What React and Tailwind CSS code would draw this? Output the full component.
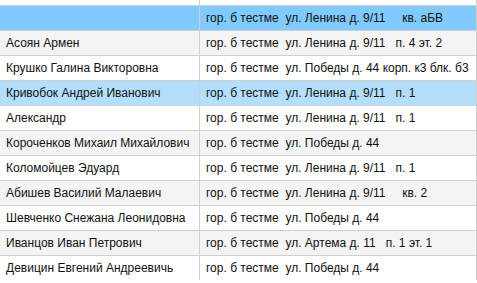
import React from 'react';

const rows = [
    { name: '', addr: 'гор. б тестме  ул. Ленина д. 9/11     кв. аБВ', bg: 'bg-[#80cafd]' },
    { name: 'Асоян Армен', addr: 'гор. б тестме  ул. Ленина д. 9/11   п. 4 эт. 2', bg: 'bg-[#f4f4f4]' },
    { name: 'Крушко Галина Викторовна', addr: 'гор. б тестме  ул. Победы д. 44 корп. к3 блк. б3', bg: 'bg-white' },
    { name: 'Кривобок Андрей Иванович', addr: 'гор. б тестме  ул. Ленина д. 9/11   п. 1', bg: 'bg-[#b4dffc]' },
    { name: 'Александр', addr: 'гор. б тестме  ул. Ленина д. 9/11   п. 1', bg: 'bg-white' },
    { name: 'Короченков Михаил Михайлович', addr: 'гор. б тестме  ул. Победы д. 44', bg: 'bg-[#f4f4f4]' },
    { name: 'Коломойцев Эдуард', addr: 'гор. б тестме  ул. Ленина д. 9/11   п. 1', bg: 'bg-white' },
    { name: 'Абишев Василий Малаевич', addr: 'гор. б тестме  ул. Ленина д. 9/11     кв. 2', bg: 'bg-[#f4f4f4]' },
    { name: 'Шевченко Снежана Леонидовна', addr: 'гор. б тестме  ул. Победы д. 44', bg: 'bg-white' },
    { name: 'Иванцов Иван Петрович', addr: 'гор. б тестме  ул. Артема д. 11   п. 1 эт. 1', bg: 'bg-[#f4f4f4]' },
    { name: 'Девицин Евгений Андреевичь', addr: 'гор. б тестме  ул. Победы д. 44', bg: 'bg-white' },
];

export default function App() {
    return (
        <div className="w-[477px] h-[283px] overflow-hidden bg-white font-['Liberation_Sans',Arial,sans-serif] text-[12px] text-[#111]">
            {/* tail of the row above, cut off */}
            <div className="flex h-[5px]">
                <div className="w-[200px] border-r border-[#d0d0d0]" />
                <div className="w-[277px] border-r border-[#d0d0d0]" />
            </div>
            {rows.map((row, i) => (
                <div key={i} className={`flex h-[25px] border-t border-[#d0d0d0] ${row.bg}`}>
                    <div className="w-[200px] border-r border-[#d0d0d0] flex items-center pl-[6px] whitespace-pre overflow-hidden">
                        {row.name}
                    </div>
                    <div className="w-[277px] border-r border-[#d0d0d0] flex items-center pl-[6px] whitespace-pre overflow-hidden">
                        {row.addr}
                    </div>
                </div>
            ))}
        </div>
    );
}
